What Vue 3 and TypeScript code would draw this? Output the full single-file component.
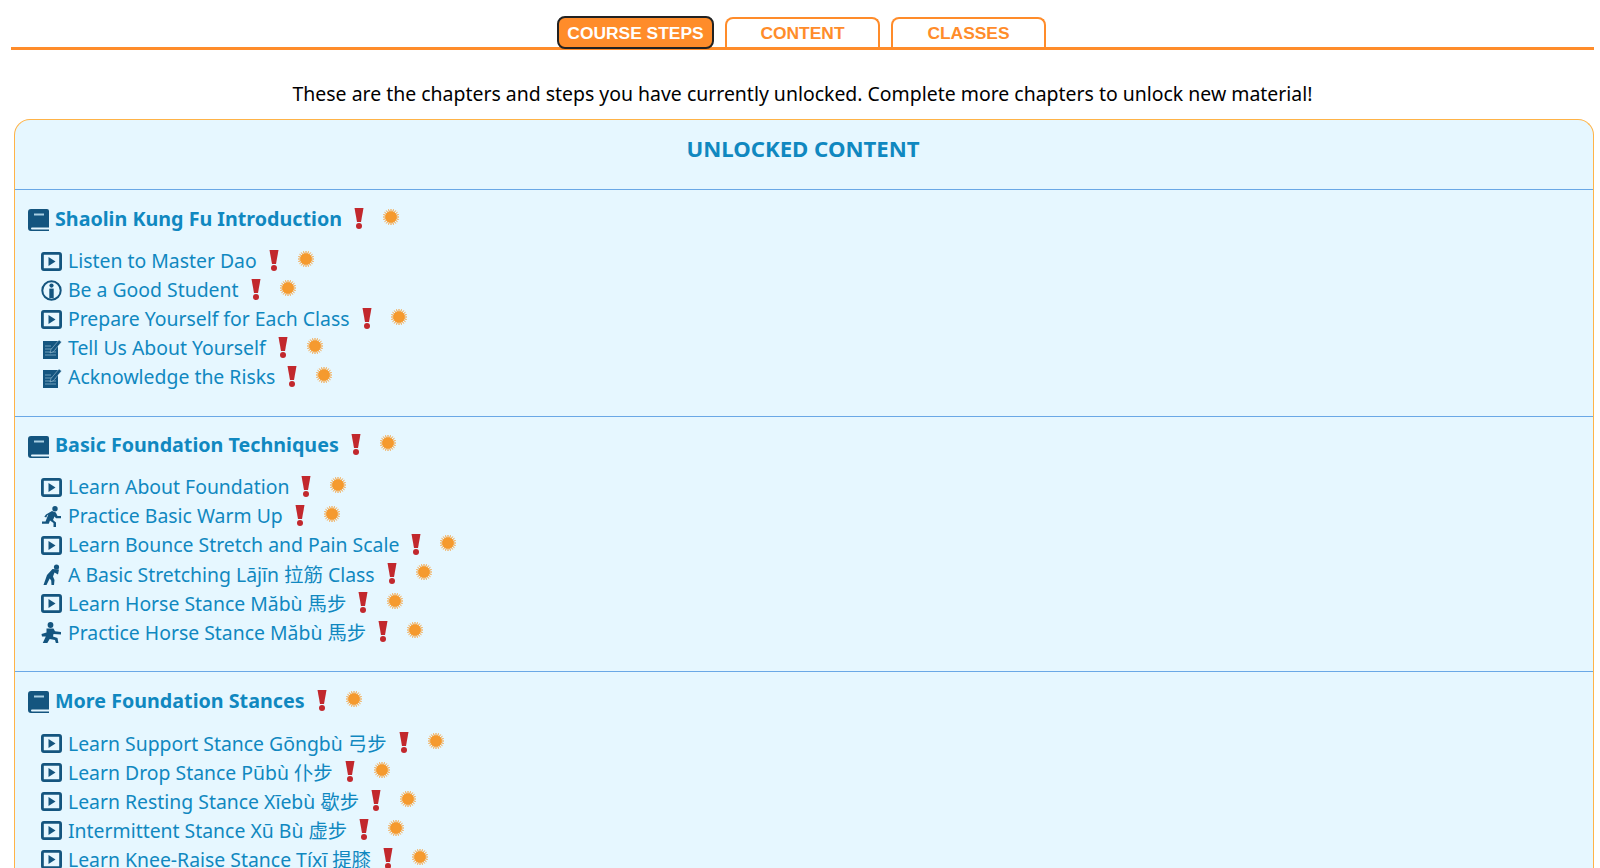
<template>
  <div class="page">
    <nav class="tabs">
      <a v-for="tab in tabs" :key="tab" class="tab" :class="{ active: tab === activeTab }">{{ tab }}</a>
    </nav>

    <p class="intro">
      These are the chapters and steps you have currently unlocked. Complete more chapters to unlock new material!
    </p>

    <section class="panel">
      <h2 class="panel-title">UNLOCKED CONTENT</h2>

      <div v-for="chapter in chapters" :key="chapter.title" class="chapter">
        <h3 class="chapter-title">
          <svg class="book" viewBox="0 0 21 22">
            <path d="M3 0h16a2 2 0 0 1 2 2v16.500H4a1 1 0 0 0 0 2h17V22H3a3 3 0 0 1-3-3V3a3 3 0 0 1 3-3z" fill="#14557f" />
            <path d="M6 4.500h10v2H6z" fill="#a9cfe2" />
          </svg>
          <span>{{ chapter.title }}</span>
          <svg class="alert" viewBox="0 0 10 21">
            <path d="M0.500 0h9L7 14H3z" fill="#c2282d" />
            <circle cx="5" cy="18" r="3" fill="#c2282d" />
          </svg>
          <svg class="sun" viewBox="-8 -8 16 16">
            <circle r="5.800" fill="#f59a2f" />
            <path :d="sunRays" stroke="#f59a2f" stroke-width="1" fill="none" />
          </svg>
        </h3>

        <ul class="steps">
          <li v-for="step in chapter.steps" :key="step.label" class="step">
            <svg class="step-icon" viewBox="0 0 21 21">
              <template v-if="step.icon === 'video'">
                <rect x="1.400" y="2.400" width="18.200" height="16.200" rx="1.500" fill="none" stroke="#14557f" stroke-width="2.800" />
                <path d="M7.500 6l7 4.500-7 4.500z" fill="#14557f" />
              </template>
              <template v-else-if="step.icon === 'info'">
                <circle cx="10.500" cy="10.500" r="9.200" fill="none" stroke="#14557f" stroke-width="2" />
                <circle cx="10.500" cy="5.600" r="2.100" fill="#14557f" />
                <path d="M8.300 8.600h4.400v9.500H8.300z" fill="#14557f" />
              </template>
              <template v-else-if="step.icon === 'form'">
                <path d="M2 3h15v18H2z" fill="#14557f" />
                <path d="M4 8h6M4 11h11M4 14h11M4 17h11" stroke="#6f9fba" stroke-width="1" />
                <path d="M10 11.500l8-9.500 2.500 2-8 9.500-3.500 1.500z" fill="#14557f" stroke="#e6f7ff" stroke-width="0.400" />
              </template>
              <template v-else-if="step.icon === 'run'">
                <circle cx="14" cy="2.800" r="2.700" fill="#14557f" />
                <path d="M5 8.500L11 5l3.800 1.500 1.700 3.500h3.500v2.300h-5l-1.500-1.800-1.500 3.500 3 2.500V21h-2.500v-4l-3.500-2.500-1.200 3.200H1v-2.300h3.500l2.800-6.800-1 .6-1 2.400-2-.8z" fill="#14557f" />
              </template>
              <template v-else-if="step.icon === 'stretch'">
                <circle cx="15.500" cy="3" r="2.600" fill="#14557f" />
                <path d="M18 5.500l-1 5-3.500-2-1.500 4 1.500 3.500-.5 5h-2.500l-.3-4.500-1.500-2L5.500 21H2.500l3.500-10L11.500 5z" fill="#14557f" />
              </template>
              <template v-else>
                <circle cx="9.500" cy="3" r="2.900" fill="#14557f" />
                <path d="M5.500 6.500h7l1.500 2.800 6 .7v2.500l-7.500-.5-.5 2.500 4.500 1.500 1 5.500h-2.500l-1-3.600-5.300-.8-2.700 4.400H1.500l3.300-7L1 14.500.5 12 5.500 10.500z" fill="#14557f" />
              </template>
            </svg>
            <span class="step-label">{{ step.label }}</span>
            <svg class="alert" viewBox="0 0 10 21">
              <path d="M0.500 0h9L7 14H3z" fill="#c2282d" />
              <circle cx="5" cy="18" r="3" fill="#c2282d" />
            </svg>
            <svg class="sun" viewBox="-8 -8 16 16">
              <circle r="5.800" fill="#f59a2f" />
              <path :d="sunRays" stroke="#f59a2f" stroke-width="1" fill="none" />
            </svg>
          </li>
        </ul>
      </div>
    </section>
  </div>
</template>

<script setup lang="ts">
type StepIcon = 'video' | 'info' | 'form' | 'run' | 'stretch' | 'stance'

interface Step {
  label: string
  icon: StepIcon
}

interface Chapter {
  title: string
  steps: Step[]
}

const tabs = ['COURSE STEPS', 'CONTENT', 'CLASSES']
const activeTab = 'COURSE STEPS'

// spikes round the little sun
const sunRays = Array.from({ length: 20 }, (_, i) => {
  const a = (i / 20) * Math.PI * 2
  return `M${(Math.cos(a) * 4).toFixed(2)} ${(Math.sin(a) * 4).toFixed(2)}L${(Math.cos(a) * 8).toFixed(2)} ${(Math.sin(a) * 8).toFixed(2)}`
}).join('')

const chapters: Chapter[] = [
  {
    title: 'Shaolin Kung Fu Introduction',
    steps: [
      { label: 'Listen to Master Dao', icon: 'video' },
      { label: 'Be a Good Student', icon: 'info' },
      { label: 'Prepare Yourself for Each Class', icon: 'video' },
      { label: 'Tell Us About Yourself', icon: 'form' },
      { label: 'Acknowledge the Risks', icon: 'form' }
    ]
  },
  {
    title: 'Basic Foundation Techniques',
    steps: [
      { label: 'Learn About Foundation', icon: 'video' },
      { label: 'Practice Basic Warm Up', icon: 'run' },
      { label: 'Learn Bounce Stretch and Pain Scale', icon: 'video' },
      { label: 'A Basic Stretching Lājīn 拉筋 Class', icon: 'stretch' },
      { label: 'Learn Horse Stance Măbù 馬步', icon: 'video' },
      { label: 'Practice Horse Stance Măbù 馬步', icon: 'stance' }
    ]
  },
  {
    title: 'More Foundation Stances',
    steps: [
      { label: 'Learn Support Stance Gōngbù 弓步', icon: 'video' },
      { label: 'Learn Drop Stance Pūbù 仆步', icon: 'video' },
      { label: 'Learn Resting Stance Xīebù 歇步', icon: 'video' },
      { label: 'Intermittent Stance Xū Bù 虚步', icon: 'video' },
      { label: 'Learn Knee-Raise Stance Tíxī 提膝', icon: 'video' }
    ]
  }
]
</script>

<style scoped>
.page {
  height: 868px;
  overflow: hidden;
  padding-right: 6px;
  font-family: "Noto Sans", "Noto Sans CJK TC", sans-serif;
  color: #000;
  background: #fff;
}

.tabs {
  display: flex;
  justify-content: center;
  align-items: flex-end;
  gap: 11px;
  height: 50px;
  margin-left: 11px;
  padding-right: 2px;
  box-sizing: border-box;
  border-bottom: 3px solid #ff8c2a;
}

.tab {
  width: 155px;
  height: 30px;
  box-sizing: border-box;
  border: 2.500px solid #ff8c2a;
  border-bottom: none;
  border-radius: 8px 8px 0 0;
  background: #fff;
  color: #ff8c2a;
  font: bold 17.400px/29px "Liberation Sans", Arial, sans-serif;
  text-align: center;
}

.tab.active {
  width: 157px;
  height: 33px;
  margin-bottom: -2px;
  border: 2px solid #222;
  border-radius: 8px;
  background: #ff8c2a;
  color: #fff;
  line-height: 31px;
}

.intro {
  margin: 29px 0 0 11px;
  height: 30px;
  font-size: 19.450px;
  line-height: 30px;
  text-align: center;
}

.panel {
  margin: 10px 0 0 14px;
  border: 1.500px solid #ffb347;
  border-bottom: none;
  border-radius: 16px 16px 0 0;
  background: #e6f7ff;
}

.panel-title {
  margin: 0;
  height: 69px;
  box-sizing: border-box;
  padding-top: 11px;
  padding-right: 2px;
  font-size: 22.200px;
  line-height: 35px;
  font-weight: 700;
  text-align: center;
  color: #1088c0;
}

.chapter {
  border-top: 1.500px solid #6aa8e6;
  padding: 14.500px 13px 25px;
}

.chapter-title {
  display: flex;
  align-items: center;
  margin: 0 0 14px;
  height: 27px;
  font-size: 19.700px;
  font-weight: 700;
  color: #1088c0;
}

.book {
  width: 21px;
  height: 22px;
  margin-right: 6px;
  margin-top: 4px;
  flex: none;
}

.alert {
  width: 10px;
  height: 21px;
  margin-left: 12px;
  flex: none;
}

.sun {
  width: 16px;
  height: 16px;
  margin-left: 19px;
  margin-bottom: 3px;
  flex: none;
}

.steps {
  margin: 0;
  padding: 0 0 0 13px;
  list-style: none;
}

.step {
  display: flex;
  align-items: center;
  height: 29px;
  font-size: 19.400px;
  color: #1088c0;
}

.step-icon {
  width: 21px;
  height: 21px;
  margin-right: 6px;
  margin-top: 2px;
  flex: none;
}

.step-label {
  white-space: nowrap;
}
</style>

<style>
html, body {
  margin: 0;
  overflow: hidden;
}
</style>
